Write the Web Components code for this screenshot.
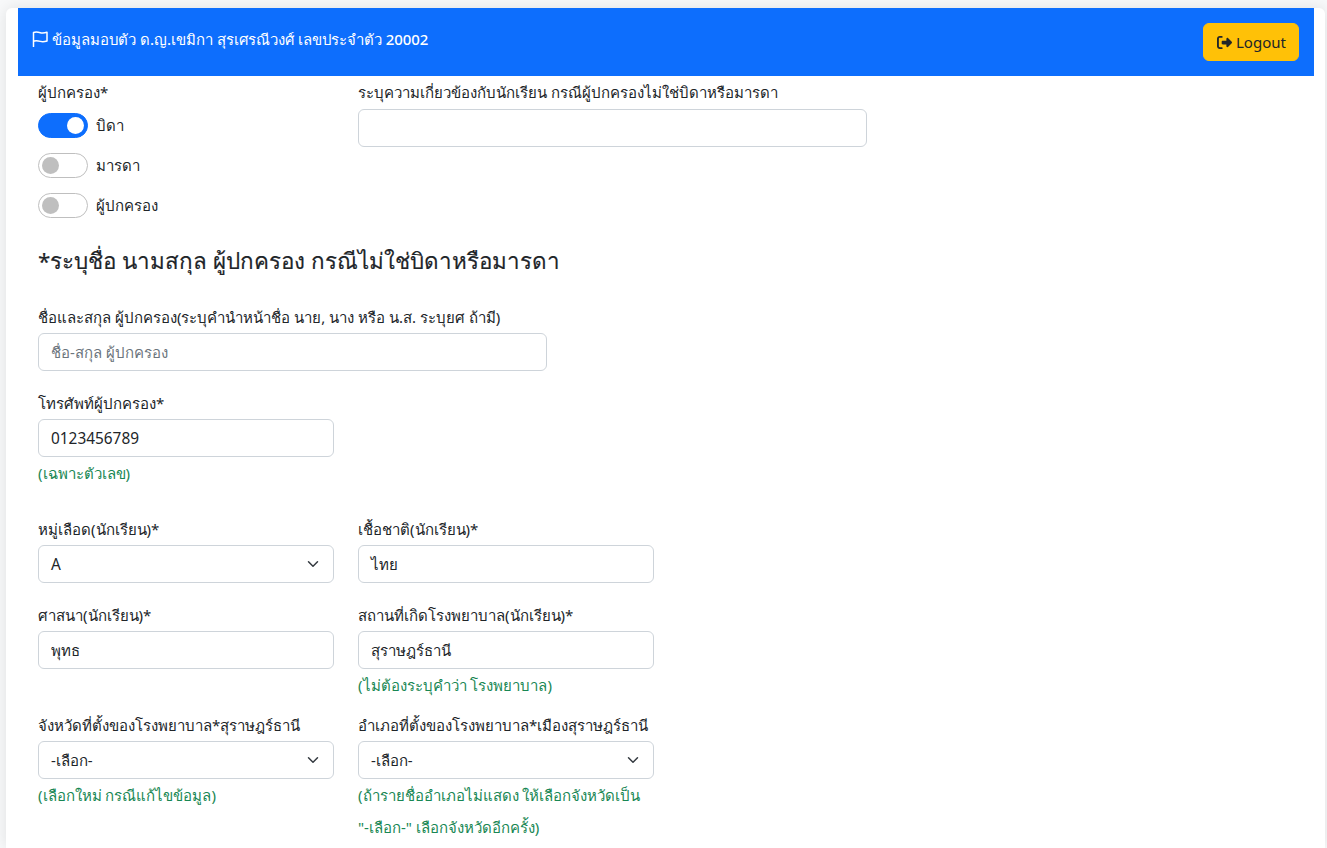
<!DOCTYPE html>
<html lang="th">
<head>
<meta charset="utf-8">
<title>ข้อมูลมอบตัว</title>
<style>
  html, body { margin: 0; padding: 0; height: 100%; overflow: hidden; }
  body {
    background: #f8f9fa;
    font-family: "Noto Sans", sans-serif;
    font-size: 15px;
    line-height: 24px;
    color: #212529;
  }
</style>
</head>
<body>
<template id="t-page">
  <style>
    :host { display: block; padding: 8px 2px 0 6px; }
    .card { background: #fff; box-shadow: 0 0 16px rgba(0,0,0,.1); border-radius: 6px 6px 0 0; padding: 0 11px 0 12px; height: 840px; box-sizing: border-box; }
    .body { padding: 0 20px; }
  </style>
  <div class="card">
    <slot name="header"></slot>
    <div class="body"><slot></slot></div>
  </div>
</template>

<template id="t-header">
  <style>
    :host { display: block; background: #0d6efd; color: #fff; height: 68px; }
    .bar { display: flex; justify-content: space-between; height: 68px; padding: 15px 15px 0 14px; box-sizing: border-box; }
    .title { display: flex; align-items: center; gap: 4px; height: 32px; font-weight: 500; font-size: 14.95px; }
    .title svg { width: 16px; height: 16px; flex: none; }
    button {
      display: flex; align-items: center; gap: 4px; width: 96px; height: 38px; padding: 0 0 0 13px;
      background: #ffc107; border: 1px solid #ffc107; border-radius: 6px; color: #212529;
      font-family: inherit; font-size: 15px; font-weight: 400;
    }
    button svg { width: 15px; height: 15px; fill: currentColor; flex: none; }
  </style>
  <div class="bar">
    <div class="title">
      <svg viewBox="0 0 16 16" fill="none" stroke="currentColor" stroke-width="1.5" stroke-linecap="round" stroke-linejoin="round"><path d="M1.500 15.500V1.500c3-1 6 0 8 .4 2 .3 3.500 0 5.500-.6V10c-2 .6-3.500.9-5.500.6-2-.4-5-1.400-8-.4"/></svg>
      <span><slot></slot></span>
    </div>
    <button type="button">
      <svg viewBox="0 0 512 512"><path d="M502.6 278.6c12.5-12.5 12.5-32.8 0-45.3l-128-128c-9.2-9.2-22.9-11.9-34.9-6.9S320 115.1 320 128v64H192c-17.7 0-32 14.3-32 32v64c0 17.7 14.3 32 32 32h128v64c0 12.900 7.800 24.600 19.800 29.600s25.700 2.200 34.900-6.900l128-128zM160 96c17.700 0 32-14.300 32-32s-14.300-32-32-32H96C43 32 0 75 0 128v256c0 53 43 96 96 96h64c17.700 0 32-14.300 32-32s-14.300-32-32-32H96c-17.700 0-32-14.300-32-32V128c0-17.700 14.300-32 32-32h64z"/></svg>
      Logout
    </button>
  </div>
</template>

<template id="t-row">
  <style>
    :host { display: grid; grid-template-columns: repeat(12, 1fr); column-gap: 24px; margin: 0; }
  </style>
  <slot></slot>
</template>

<template id="t-field">
  <style>
    :host { display: block; min-width: 0; padding-bottom: var(--after, 10px); }
    label { display: block; height: 24px; margin-bottom: var(--label-gap, 4px); white-space: nowrap; }
    .control {
      display: flex; align-items: center; justify-content: space-between;
      box-sizing: border-box; height: 38px; padding: 0 12px;
      border: 1px solid #ced4da; border-radius: 6px; background: #fff; color: #212529;
      white-space: nowrap;
    }
    .control.ph { color: #6c757d; }
    .control.latin { font-size: 15.4px; padding-top: 1px; }
    svg { width: 16px; height: 12px; flex: none; }
    .control.latin svg { margin-top: -1px; }
    .hint { display: block; color: #198754; line-height: 32px; }
  </style>
  <label></label>
  <div class="control"><span class="val"></span></div>
  <div class="hint"><slot></slot></div>
</template>

<template id="t-switch">
  <style>
    :host { display: flex; align-items: center; gap: 8px; height: 40px; }
    .track { box-sizing: border-box; width: 50px; height: 25px; border-radius: 13px; border: 1px solid #bfbfbf; background: #fff; display: flex; align-items: center; padding: 0 3px; }
    .knob { width: 17px; height: 17px; border-radius: 50%; background: #bfbfbf; }
    :host([on]) .track { background: #0d6efd; border-color: #0d6efd; justify-content: flex-end; }
    :host([on]) .knob { background: #fff; }
  </style>
  <span class="track"><span class="knob"></span></span>
  <span><slot></slot></span>
</template>

<template id="t-group">
  <style>
    :host { display: block; }
    .lab { height: 24px; margin-bottom: 1px; }
  </style>
  <div class="lab"></div>
  <slot></slot>
</template>

<template id="t-heading">
  <style>
    :host { display: block; font-size: 22.4px; line-height: 32px; font-weight: 400; margin: 0; -webkit-text-stroke: .15px currentColor; }
  </style>
  <slot></slot>
</template>

<app-page>
  <app-header slot="header">ข้อมูลมอบตัว ด.ญ.เขมิกา สุรเศรณีวงศ์ เลขประจำตัว 20002</app-header>

  <form-row style="padding-top:4px">
    <switch-group style="grid-column: span 3" label="ผู้ปกครอง*">
      <form-switch on>บิดา</form-switch>
      <form-switch>มารดา</form-switch>
      <form-switch>ผู้ปกครอง</form-switch>
    </switch-group>
    <form-field style="grid-column: span 5;--label-gap:5px" label="ระบุความเกี่ยวข้องกับนักเรียน กรณีผู้ปกครองไม่ใช่บิดาหรือมารดา"></form-field>
  </form-row>

  <form-heading style="margin-top:20px;margin-bottom:28px">*ระบุชื่อ นามสกุล ผู้ปกครอง กรณีไม่ใช่บิดาหรือมารดา</form-heading>

  <form-row>
    <form-field style="grid-column: span 5;--after:20px" label="ชื่อและสกุล ผู้ปกครอง(ระบุคำนำหน้าชื่อ นาย, นาง หรือ น.ส. ระบุยศ ถ้ามี)" placeholder="ชื่อ-สกุล ผู้ปกครอง"></form-field>
  </form-row>
  <form-row>
    <form-field style="grid-column: span 3;--after:28px" label="โทรศัพท์ผู้ปกครอง*" value="0123456789" latin>(เฉพาะตัวเลข)</form-field>
  </form-row>
  <form-row>
    <form-field style="grid-column: span 3;--after:20px" label="หมู่เลือด(นักเรียน)*" value="A" select latin></form-field>
    <form-field style="grid-column: span 3;--after:20px" label="เชื้อชาติ(นักเรียน)*" value="ไทย"></form-field>
  </form-row>
  <form-row>
    <form-field style="grid-column: span 3;--after:0" label="ศาสนา(นักเรียน)*" value="พุทธ"></form-field>
    <form-field style="grid-column: span 3;--after:0" label="สถานที่เกิดโรงพยาบาล(นักเรียน)*" value="สุราษฎร์ธานี">(ไม่ต้องระบุคำว่า โรงพยาบาล)</form-field>
  </form-row>
  <form-row style="margin-top:12px">
    <form-field style="grid-column: span 3;--after:0" label="จังหวัดที่ตั้งของโรงพยาบาล*สุราษฎร์ธานี" value="-เลือก-" select>(เลือกใหม่ กรณีแก้ไขข้อมูล)</form-field>
    <form-field style="grid-column: span 3;--after:0" label="อำเภอที่ตั้งของโรงพยาบาล*เมืองสุราษฎร์ธานี" value="-เลือก-" select>(ถ้ารายชื่ออำเภอไม่แสดง ให้เลือกจังหวัดเป็น<br>"-เลือก-" เลือกจังหวัดอีกครั้ง)</form-field>
  </form-row>
</app-page>

<script>
function shadow(el, id) {
  const root = el.attachShadow({ mode: 'open' });
  root.appendChild(document.getElementById(id).content.cloneNode(true));
  return root;
}

class AppPage extends HTMLElement {
  connectedCallback() { if (!this.shadowRoot) shadow(this, 't-page'); }
}
class AppHeader extends HTMLElement {
  connectedCallback() { if (!this.shadowRoot) shadow(this, 't-header'); }
}
class FormRow extends HTMLElement {
  connectedCallback() { if (!this.shadowRoot) shadow(this, 't-row'); }
}
class FormHeading extends HTMLElement {
  connectedCallback() { if (!this.shadowRoot) shadow(this, 't-heading'); }
}
class FormSwitch extends HTMLElement {
  connectedCallback() { if (!this.shadowRoot) shadow(this, 't-switch'); }
}
class SwitchGroup extends HTMLElement {
  connectedCallback() {
    if (this.shadowRoot) return;
    const root = shadow(this, 't-group');
    root.querySelector('.lab').textContent = this.getAttribute('label');
  }
}
class FormField extends HTMLElement {
  connectedCallback() {
    if (this.shadowRoot) return;
    const root = shadow(this, 't-field');
    root.querySelector('label').textContent = this.getAttribute('label');
    const control = root.querySelector('.control');
    const val = root.querySelector('.val');
    const ph = this.getAttribute('placeholder');
    if (ph) { val.textContent = ph; control.classList.add('ph'); }
    else val.textContent = this.getAttribute('value') || '';
    if (this.hasAttribute('latin')) control.classList.add('latin');
    if (this.hasAttribute('select')) {
      control.insertAdjacentHTML('beforeend', '<svg viewBox="0 0 16 16"><path fill="none" stroke="#343a40" stroke-linecap="round" stroke-linejoin="round" stroke-width="2" d="m2 5 6 6 6-6"/></svg>');
    }
    if (!this.textContent.trim()) root.querySelector('.hint').style.display = 'none';
  }
}

customElements.define('app-page', AppPage);
customElements.define('app-header', AppHeader);
customElements.define('form-row', FormRow);
customElements.define('form-heading', FormHeading);
customElements.define('form-switch', FormSwitch);
customElements.define('switch-group', SwitchGroup);
customElements.define('form-field', FormField);
</script>
</body>
</html>
